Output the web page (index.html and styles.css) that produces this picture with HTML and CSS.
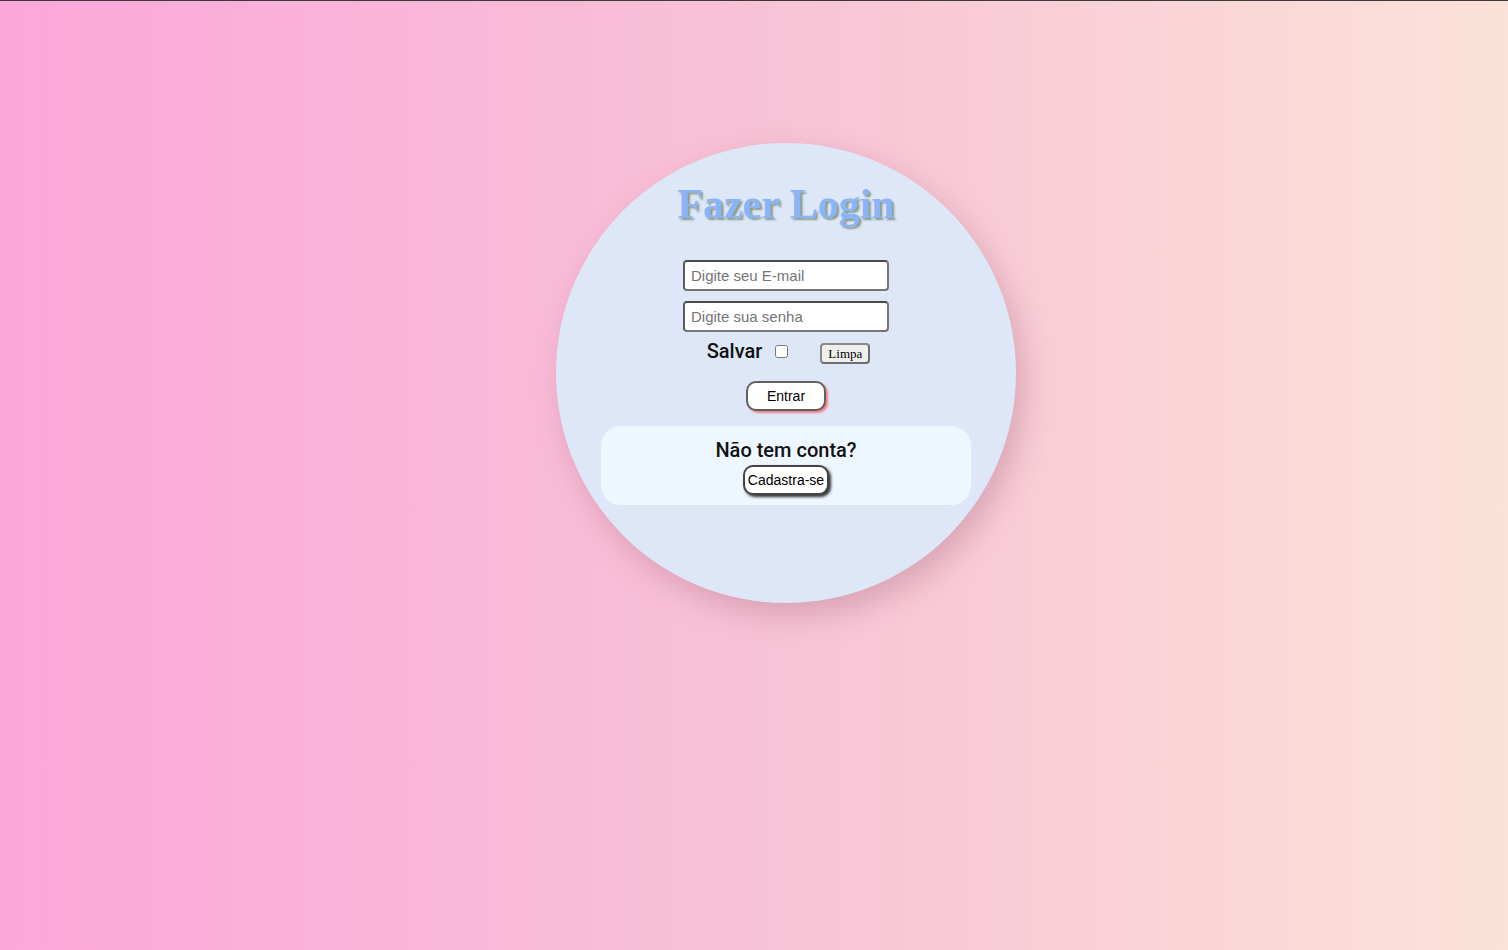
FILE: index.html
```html
<!DOCTYPE html>
<html lang="pt-BR">
<head>
<meta charset="utf-8">
<title>Fazer Login</title>
<link rel="stylesheet" href="styles.css">
</head>
<body>
<main class="page">
  <section class="circle">
    <h1 class="title">Fazer Login</h1>
    <form class="form">
      <input class="field" type="email" placeholder="Digite seu E-mail">
      <input class="field" type="password" placeholder="Digite sua senha">
      <div class="row">
        <label class="save">Salvar <input class="check" type="checkbox"></label>
        <button class="clear" type="reset">Limpa</button>
      </div>
      <button class="enter" type="button">Entrar</button>
    </form>
    <div class="signup">
      <p class="signup-text">Não tem conta?</p>
      <button class="signup-btn" type="button">Cadastra-se</button>
    </div>
  </section>
</main>
</body>
</html>
```

FILE: styles.css
```css
html, body {
  margin: 0;
  padding: 0;
  height: 100%;
}

body {
  border-top: 1px solid #3a3a3a;
  box-sizing: border-box;
  background: linear-gradient(to right, #fba7da 0%, #f8c2d6 50%, #fbe2d8 100%);
  font-family: "Liberation Sans", Arial, sans-serif;
}

.page {
  display: flex;
  justify-content: center;
  padding-top: 142px;
  padding-left: 64px;
}

.circle {
  width: 460px;
  height: 460px;
  border-radius: 50%;
  background: #dde7f7;
  box-shadow: 8px 12px 30px rgba(180, 120, 140, 0.45);
  display: flex;
  flex-direction: column;
  align-items: center;
  box-sizing: border-box;
  padding-top: 35px;
}

.title {
  margin: 0;
  font-family: "Liberation Serif", "Times New Roman", serif;
  font-weight: bold;
  font-size: 42px;
  line-height: 52px;
  color: #8ab4f8;
  text-shadow: 2px 2px 2px #8a9a8a;
}

.form {
  display: flex;
  flex-direction: column;
  align-items: center;
  margin-top: 30px;
}

.field {
  width: 206px;
  height: 31px;
  box-sizing: border-box;
  border: 2px solid #767676;
  border-top-color: #4a4a4a;
  border-left-color: #5a5a5a;
  border-radius: 4px;
  padding: 0 6px;
  font-family: "Liberation Sans", Arial, sans-serif;
  font-size: 15px;
  background: #fff;
  margin-bottom: 10px;
}

.field::placeholder {
  color: #757575;
}

.row {
  display: flex;
  align-items: center;
  margin-top: -3px;
  padding-left: 5px;
  height: 24px;
}

.save {
  display: flex;
  align-items: center;
  font-family: Roboto, "Liberation Sans", sans-serif;
  font-weight: 500;
  font-size: 20px;
  color: #111;
}

.check {
  width: 13px;
  height: 13px;
  margin: 0 0 0 13px;
}

.clear {
  margin-left: 32px;
  margin-top: 5px;
  width: 50px;
  height: 21px;
  padding: 0;
  box-sizing: border-box;
  font-family: "Liberation Serif", "Times New Roman", serif;
  font-size: 13px;
  color: #000;
  background: #efefef;
  border: 2px solid #6e6e6e;
  border-top-color: #8a8a8a;
  border-left-color: #8a8a8a;
  border-radius: 4px;
}

.enter {
  margin-top: 18px;
  width: 80px;
  height: 30px;
  box-sizing: border-box;
  background: #fff;
  border: 2px solid #606060;
  border-radius: 10px;
  box-shadow: 2px 2px 2px #f2808a;
  font-family: "Liberation Sans", Arial, sans-serif;
  font-size: 14px;
  color: #000;
  padding: 0;
}

.signup {
  margin-top: 15px;
  width: 370px;
  height: 79px;
  box-sizing: border-box;
  background: #eef6ff;
  border-radius: 20px;
  display: flex;
  flex-direction: column;
  align-items: center;
  padding-top: 12px;
}

.signup-text {
  margin: 0;
  font-family: Roboto, "Liberation Sans", sans-serif;
  font-weight: 500;
  font-size: 20px;
  line-height: 24px;
  color: #111;
}

.signup-btn {
  margin-top: 3px;
  width: 86px;
  height: 30px;
  box-sizing: border-box;
  background: #fff;
  border: 2px solid #444;
  border-radius: 10px;
  box-shadow: 2px 2px 3px #333;
  font-family: "Liberation Sans", Arial, sans-serif;
  font-size: 14px;
  color: #000;
  padding: 0;
}
```
